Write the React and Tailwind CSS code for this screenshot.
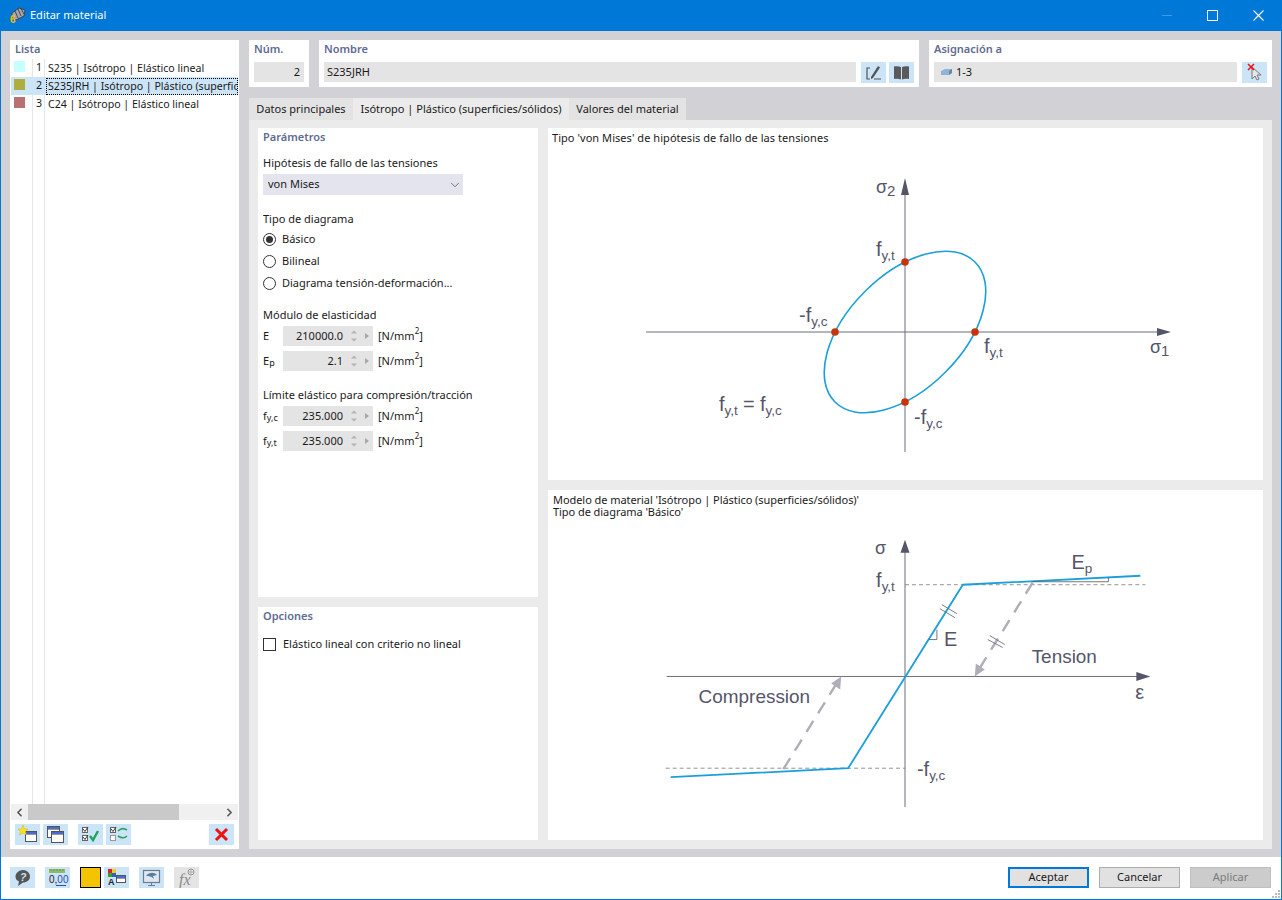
import React from 'react'
import { ChevronDown, ChevronLeft, ChevronRight } from 'lucide-react'

function IconBtn({ children, gray, className = '' }) {
  return (
    <div className={`w-[25px] h-[21px] flex items-center justify-center shrink-0 ${gray ? 'bg-[#e4e4e4]' : 'bg-[#cce4f7]'} ${className}`}>
      {children}
    </div>
  )
}

function Window({ x, y, w = 14, h = 14 }) {
  return (
    <g>
      <rect x={x + 0.5} y={y + 0.5} width={w} height={h} fill="#fff" stroke="#555" />
      <rect x={x + 1} y={y + 1} width={w - 1} height="2" fill="#4a6bd0" />
      <rect x={x + 1} y={y + 3} width={w - 1} height="1" fill="#999" />
    </g>
  )
}

function Section({ children, className = '' }) {
  return <div className={`text-[#5f6b93] font-semibold leading-[18px] ${className}`}>{children}</div>
}

function ListRow({ color, num, name, selected }) {
  return (
    <div className={`h-[18px] flex items-center overflow-hidden whitespace-nowrap text-[10.6px] ${selected ? 'bg-[#cce4f7]' : ''}`}>
      <div className="w-[22px] flex pl-[3px] pb-[3px] shrink-0">
        <div className="w-[11px] h-[11px]" style={{ backgroundColor: color }} />
      </div>
      <div className="w-[9px] text-right shrink-0">{num}</div>
      <div className={`ml-[4px] pl-[1px] flex-1 h-[17px] leading-[15px] overflow-hidden ${selected ? 'border border-dotted border-black' : 'border border-transparent'}`}>{name}</div>
    </div>
  )
}

function Radio({ label, checked }) {
  return (
    <div className="h-[22px] flex items-center gap-[6px]">
      <div className="w-[13px] h-[13px] rounded-full border border-[#333] bg-white flex items-center justify-center">
        {checked && <div className="w-[7px] h-[7px] rounded-full bg-[#333]" />}
      </div>
      <span>{label}</span>
    </div>
  )
}

function NumField({ label, sub, value, className = '' }) {
  return (
    <div className={`h-[20px] flex items-center ${className}`}>
      <div className="w-[20px] shrink-0">
        {label}
        <span className="text-[9px] relative top-[1px]">{sub}</span>
      </div>
      <div className="w-[90px] h-[20px] bg-[#e4e4e4] flex items-center shrink-0">
        <div className="flex-1 text-right">{value}</div>
        <svg width="30" height="20" viewBox="0 0 30 20" className="shrink-0">
          <path d="M8 7.500 L11 4.500 L14 7.500 Z M8 12.500 L11 15.500 L14 12.500 Z" fill="#b4b4b4" />
          <path d="M22 7 L26 10 L22 13 Z" fill="#a8a8a8" />
        </svg>
      </div>
      <div className="ml-[5px]">[N/mm<sup className="text-[8px] relative -top-[1px] align-super leading-none">2</sup>]</div>
    </div>
  )
}

// etiqueta con subindice dentro de los diagramas
function Lbl({ x, y, t, sub, size = 20, subSize = 13.5, dy = 4 }) {
  return (
    <text x={x} y={y} fontSize={size} fill="#55556a" fontFamily="'Liberation Sans', sans-serif">
      {t}
      {sub && <tspan fontSize={subSize} dy={dy}>{sub}</tspan>}
    </text>
  )
}

function YieldDiagram() {
  return (
    <svg viewBox="548 128 715 352" className="w-full h-full">
      <path d="M905 452 V190 M646 332 H1160" stroke="#6c6c80" strokeWidth="1" fill="none" />
      <path d="M905 178 L901 195 H909 Z M1171 332 L1157 328 V336 Z" fill="#55556a" />
      <ellipse cx="905" cy="332" rx="99" ry="57" transform="rotate(-45 905 332)" fill="none" stroke="#1a9fdc" strokeWidth="1.600" />
      <circle cx="905" cy="262" r="3.800" fill="#c8340a" />
      <circle cx="975" cy="332" r="3.800" fill="#c8340a" />
      <circle cx="835" cy="332" r="3.800" fill="#c8340a" />
      <circle cx="905" cy="402" r="3.800" fill="#c8340a" />
      <Lbl x={876} y={193} t="σ" sub="2" size={18} subSize={15} dy={3} />
      <Lbl x={1150} y={353} t="σ" sub="1" size={18} subSize={15} dy={3} />
      <Lbl x={876} y={256} t="f" sub="y,t" />
      <Lbl x={984} y={353} t="f" sub="y,t" />
      <Lbl x={799} y={322} t="-f" sub="y,c" />
      <Lbl x={914} y={424} t="-f" sub="y,c" />
      <Lbl x={719} y={411} t="f" sub="y,t" />
      <Lbl x={743} y={411} t="=" />
      <Lbl x={760} y={411} t="f" sub="y,c" />
    </svg>
  )
}

function CurveDiagram() {
  return (
    <svg viewBox="548 490 715 351" className="w-full h-full">
      <path d="M905 808 V552 M666 677 H1140" stroke="#6c6c80" strokeWidth="1" fill="none" />
      <path d="M905 540 L900.500 553 H909.500 Z M1151 677 L1137 672.500 V681.500 Z" fill="#55556a" />
      <path d="M905 585 H1146 M665 769 H905" stroke="#777" strokeWidth="0.800" strokeDasharray="4 3" fill="none" />
      <path d="M1033 583 L979 670 M783 770 L837 683" stroke="#aeaeb8" strokeWidth="2.400" strokeDasharray="13 9" fill="none" />
      <path d="M975 677 L976 664 L985 670 Z M841 677 L840 690 L831 684 Z" fill="#aeaeb8" />
      <path d="M670 778 L848 769 L963 585 L1141 576" stroke="#1a9fdc" strokeWidth="1.800" fill="none" />
      <path d="M1109 578 V582 H1033 M929 640 H937 V630" stroke="#555" strokeWidth="0.800" fill="none" />
      <path d="M940 609 L955 618 M942 605 L957 614 M988 640 L1003 648 M990 636 L1005 645" stroke="#6c6c80" strokeWidth="0.900" fill="none" />
      <Lbl x={875} y={554} t="σ" size={18} />
      <Lbl x={876} y={587} t="f" sub="y,t" />
      <Lbl x={1072} y={569} t="E" sub="p" />
      <Lbl x={944} y={646} t="E" />
      <Lbl x={1032} y={663} t="Tension" size={19} />
      <Lbl x={698} y={704} t="Compression" size={19} />
      <Lbl x={1136} y={700} t="ε" />
      <Lbl x={917} y={777} t="-f" sub="y,c" />
    </svg>
  )
}

export default function App() {
  return (
    <div className="w-[1282px] h-[900px] flex flex-col border-x border-b border-[#0078d7] bg-white text-[11px] text-[#1a1a1a] font-['Noto_Sans',sans-serif] overflow-hidden">
      {/* barra de titulo */}
      <div className="h-[31px] shrink-0 bg-[#0078d7] -mx-[1px] flex items-center text-white">
        <svg width="17" height="17" viewBox="0 0 17 17" className="ml-[9px]">
          <path d="M3 6 L10 1 L16 3 L15 9 L7 13 L3 11 Z" fill="#a4a4b0" stroke="#333" strokeWidth="0.800" />
          <path d="M6 4 L9 11 M9 2 L12 9 M12 1.500 L15 7" stroke="#333" strokeWidth="0.800" />
          <text x="1" y="16" fontSize="10" fontWeight="700" fill="#f4c000" fontFamily="'Liberation Sans', sans-serif">6</text>
        </svg>
        <span className="ml-[4px]">Editar material</span>
        <div className="flex-1" />
        <div className="w-[10px] h-px bg-[#3f9be3] mr-[35px]" />
        <div className="w-[11px] h-[11px] border border-white mr-[35px]" />
        <svg width="11" height="11" viewBox="0 0 11 11" className="mr-[18px]"><path d="M0.500 0.500 L10.500 10.500 M10.500 0.500 L0.500 10.500" stroke="#fff" strokeWidth="1.100" /></svg>
      </div>

      <div className="flex-1 bg-[#d2d1d6] flex gap-[10px] pl-[9px] pr-[9px] pt-[9px] pb-[8px] min-h-0">
        {/* lista */}
        <div className="w-[229px] bg-white flex flex-col shrink-0">
          <Section className="pl-[5px] h-[19px]">Lista</Section>
          <div className="flex-1 relative pl-[1px] pr-[1px]">
            <div className="absolute left-[22px] top-0 bottom-0 w-px bg-[#e6e6e6]" />
            <div className="absolute left-[34px] top-0 bottom-0 w-px bg-[#e6e6e6]" />
            <div className="relative">
              <ListRow color="#c6ffff" num="1" name="S235 | Isótropo | Elástico lineal" />
              <ListRow color="#aeae3e" num="2" name="S235JRH | Isótropo | Plástico (superficies/sólidos)" selected />
              <ListRow color="#b87070" num="3" name="C24 | Isótropo | Elástico lineal" />
            </div>
          </div>
          <div className="h-[16px] mx-[1px] bg-[#f0f0f0] flex items-center relative shrink-0">
            <ChevronLeft size={13} strokeWidth={3} className="ml-[2px] text-[#555]" />
            <div className="ml-[2px] w-[151px] h-[16px] bg-[#c9c9c9]" />
            <div className="flex-1" />
            <ChevronRight size={13} strokeWidth={3} className="mr-[2px] text-[#555]" />
          </div>
          <div className="h-[29px] flex items-center pl-[5px] pr-[5px] shrink-0">
            <IconBtn>
              <svg width="25" height="21" viewBox="0 0 25 21"><Window x={10} y={7} w={11} h={10} /><path d="M8 1 L9.500 5 L13 5 L10.500 7.500 L11.500 11 L8 9 L4.500 11 L5.500 7.500 L3 5 L6.500 5 Z" fill="#ffe21a" stroke="#c8a800" strokeWidth="0.400" /></svg>
            </IconBtn>
            <IconBtn className="ml-[3px]">
              <svg width="25" height="21" viewBox="0 0 25 21"><Window x={4} y={2} w={12} h={11} /><Window x={8} y={7} w={12} h={11} /></svg>
            </IconBtn>
            <IconBtn className="ml-[10px]">
              <svg width="25" height="21" viewBox="0 0 25 21"><rect x="4.500" y="3.500" width="5" height="5" fill="#fff" stroke="#666" /><rect x="4.500" y="11.500" width="5" height="5" fill="#fff" stroke="#666" /><path d="M5 5 L7 7.500 L10 3 M5 13 L7 15.500 L10 11" stroke="#333" fill="none" /><path d="M12 12 L15 16 L20 7" stroke="#1ca55a" strokeWidth="2.400" fill="none" /></svg>
            </IconBtn>
            <IconBtn className="ml-[3px]">
              <svg width="25" height="21" viewBox="0 0 25 21"><rect x="4.500" y="3.500" width="5" height="5" fill="#fff" stroke="#666" /><rect x="4.500" y="11.500" width="5" height="5" fill="#fff" stroke="#999" /><path d="M5 5 L7 7.500 L10 3" stroke="#333" fill="none" /><path d="M12 7 C15 4 18 4 21 6 M21 12 C18 15 15 14 12 12" stroke="#2aa05a" strokeWidth="1.600" fill="none" /></svg>
            </IconBtn>
            <div className="flex-1" />
            <IconBtn>
              <svg width="25" height="21" viewBox="0 0 25 21"><path d="M7 5 L18 16 M18 5 L7 16" stroke="#f01010" strokeWidth="3" /></svg>
            </IconBtn>
          </div>
        </div>

        {/* derecha */}
        <div className="flex-1 flex flex-col min-w-0">
          <div className="h-[47px] flex gap-[10px] shrink-0">
            <div className="w-[60px] bg-white px-[5px]">
              <Section className="h-[22px]">Núm.</Section>
              <div className="h-[20px] bg-[#e4e4e4] flex items-center justify-end pr-[4px]">2</div>
            </div>
            <div className="w-[600px] bg-white px-[5px]">
              <Section className="h-[22px]">Nombre</Section>
              <div className="flex gap-[3px]">
                <div className="w-[532px] h-[20px] bg-[#e4e4e4] flex items-center pl-[3px] mr-[2px]">S235JRH</div>
                <IconBtn>
                  <svg width="25" height="21" viewBox="0 0 25 21"><path d="M9 6 H6 V17 H9 M13 17 H20" stroke="#555" strokeWidth="1.200" fill="none" /><path d="M10 15 L17 4 L19 5.500 L12 16 L10 17 Z" fill="#555" /></svg>
                </IconBtn>
                <IconBtn>
                  <svg width="25" height="21" viewBox="0 0 25 21"><path d="M12 5 C10 4 7 4 5 4.500 V17 C7 16.500 10 16.500 12 17.500 Z M13 5 C15 4 18 4 20 4.500 V17 C18 16.500 15 16.500 13 17.500 Z" fill="#5a5a5a" /></svg>
                </IconBtn>
              </div>
            </div>
            <div className="flex-1 bg-white px-[5px]">
              <Section className="h-[22px]">Asignación a</Section>
              <div className="flex gap-[5px]">
                <div className="flex-1 h-[20px] bg-[#e4e4e4] flex items-center pl-[6px]">
                  <svg width="15" height="10" viewBox="0 0 15 10"><path d="M1 4 L5 2 H12 V6 L9 8 H1 Z" fill="#8fb4d8" /><path d="M9 8 V4 L12 2 V6 Z" fill="#6488ac" /></svg>
                  <span className="ml-[1px]">1-3</span>
                </div>
                <IconBtn>
                  <svg width="25" height="21" viewBox="0 0 25 21"><path d="M10 5 L10 17 L13 14 L15 18 L17 17 L15 13 L19 13 Z" fill="#e8e8e8" stroke="#777" /><path d="M6 2 L12 8 M12 2 L6 8" stroke="#f01010" strokeWidth="1.500" /></svg>
                </IconBtn>
              </div>
            </div>
          </div>

          {/* pestañas */}
          <div className="h-[22px] mt-[11px] flex shrink-0">
            <div className="w-[104px] bg-[#e3e3e3] flex items-center justify-center pt-[1px]">Datos principales</div>
            <div className="w-[216px] bg-[#ebebeb] flex items-center justify-center pt-[1px]">Isótropo | Plástico (superficies/sólidos)</div>
            <div className="w-[117px] bg-[#e3e3e3] flex items-center justify-center pt-[1px]">Valores del material</div>
          </div>

          <div className="flex-1 bg-[#ebebeb] p-[9px] pt-[8px] flex gap-[10px] min-h-0">
            <div className="w-[280px] flex flex-col gap-[10px] shrink-0">
              <div className="h-[469px] bg-white px-[5px]">
                <Section className="h-[21px]">Parámetros</Section>
                <div className="h-[18px] mt-[5px] leading-[18px]">Hipótesis de fallo de las tensiones</div>
                <div className="mt-[2px] w-[200px] h-[21px] bg-[#e4e4ee] flex items-center pl-[5px] pr-[1px] justify-between">
                  <span>von Mises</span>
                  <ChevronDown size={14} strokeWidth={1.200} className="text-[#444]" />
                </div>
                <div className="mt-[15px] h-[18px] leading-[18px]">Tipo de diagrama</div>
                <div>
                  <Radio label="Básico" checked />
                  <Radio label="Bilineal" />
                  <Radio label="Diagrama tensión-deformación..." />
                </div>
                <div className="mt-[12px] h-[18px] leading-[18px]">Módulo de elasticidad</div>
                <NumField label="E" value="210000.0" className="mt-[2px]" />
                <NumField label="E" sub="p" value="2.1" className="mt-[5px]" />
                <div className="mt-[15px] h-[18px] leading-[18px]">Límite elástico para compresión/tracción</div>
                <NumField label="f" sub="y,c" value="235.000" className="mt-[2px]" />
                <NumField label="f" sub="y,t" value="235.000" className="mt-[5px]" />
              </div>
              <div className="flex-1 bg-white px-[5px]">
                <Section className="h-[18px]">Opciones</Section>
                <div className="mt-[10px] flex items-center gap-[7px] h-[18px]">
                  <div className="w-[13px] h-[13px] border border-[#333] bg-white" />
                  <span>Elástico lineal con criterio no lineal</span>
                </div>
              </div>
            </div>
            <div className="flex-1 flex flex-col gap-[10px] min-w-0">
              <div className="h-[352px] bg-white relative">
                <div className="absolute left-[4px] top-[2px] leading-[16px] tracking-[0.05px]">Tipo 'von Mises' de hipótesis de fallo de las tensiones</div>
                <YieldDiagram />
              </div>
              <div className="flex-1 bg-white relative min-h-0">
                <div className="absolute left-[5px] top-[4px] leading-[12px] tracking-[-0.06px]">
                  Modelo de material 'Isótropo | Plástico (superficies/sólidos)'<br />Tipo de diagrama 'Básico'
                </div>
                <CurveDiagram />
              </div>
            </div>
          </div>
        </div>
      </div>

      {/* barra inferior */}
      <div className="h-[42px] bg-white shrink-0 flex items-center pl-[9px] pr-[10px] pb-[1px] relative">
        <IconBtn>
          <svg width="25" height="21" viewBox="0 0 25 21"><path d="M13 3 C17 3 20 6 20 9.500 C20 13 17 15.500 13 15.500 L8 19 L9 14.500 C6.500 13.500 5.500 11.500 5.500 9.500 C5.500 6 9 3 13 3 Z" fill="#555" /><text x="10" y="13.500" fontSize="10.500" fontWeight="700" fontStyle="italic" fill="#cce4f7" fontFamily="'Liberation Sans', sans-serif">?</text></svg>
        </IconBtn>
        <IconBtn className="ml-[10px]">
          <svg width="25" height="21" viewBox="0 0 25 21"><rect x="4" y="2" width="16" height="4" fill="#8dbb6a" /><path d="M6 2V4 M9 2V4 M12 2V4 M15 2V4 M18 2V4" stroke="#5d8a40" strokeWidth="0.700" /><text x="4" y="16" fontSize="10" fontWeight="400" fill="#222" fontFamily="'Liberation Sans', sans-serif">0,<tspan fill="#2a4fb0">00</tspan></text><path d="M11 18.500 H21" stroke="#2a4fb0" /></svg>
        </IconBtn>
        <div className="ml-[10px] w-[21px] h-[21px] bg-[#f4c400] border border-black shrink-0" />
        <IconBtn className="ml-[3px]">
          <svg width="25" height="21" viewBox="0 0 25 21"><rect x="4" y="2" width="4" height="4" fill="#e02020" /><rect x="8" y="2" width="4" height="4" fill="#e8d020" /><rect x="4" y="6" width="4" height="4" fill="#30a030" /><rect x="8" y="6" width="4" height="4" fill="#3060d0" /><Window x={12} y={8} w={9} h={7} /><text x="4" y="18" fontSize="9" fontWeight="700" fill="#222" fontFamily="'Liberation Sans', sans-serif">A</text></svg>
        </IconBtn>
        <IconBtn className="ml-[10px]">
          <svg width="25" height="21" viewBox="0 0 25 21"><rect x="4.500" y="3.500" width="16" height="12" fill="#dfe8f2" stroke="#6c7c90" strokeWidth="1.200" /><path d="M7 9 C10 5 15 5 18 8 L14 9 L15 12 C12 9 10 9 7 9 Z" fill="#5a7ca0" /><path d="M12.500 16 V18 M9 18.500 H16" stroke="#6c7c90" /></svg>
        </IconBtn>
        <IconBtn gray className="ml-[10px]">
          <svg width="25" height="21" viewBox="0 0 25 21"><text x="5" y="18" fontSize="16" fontStyle="italic" fill="#8a8a8a" fontFamily="'Liberation Serif', serif">fx</text><circle cx="17" cy="5" r="3" fill="none" stroke="#999" /><path d="M14 5 H20 M17 2 V8" stroke="#999" strokeWidth="0.600" /></svg>
        </IconBtn>
        <div className="flex-1" />
        <div className="w-[81px] h-[21px] bg-[#e1e1e1] border-2 border-[#0078d7] flex items-center justify-center">Aceptar</div>
        <div className="ml-[10px] w-[81px] h-[21px] bg-[#e1e1e1] border border-[#adadad] flex items-center justify-center">Cancelar</div>
        <div className="ml-[10px] w-[81px] h-[21px] bg-[#cccccc] border border-[#bfbfbf] flex items-center justify-center text-[#7a7a7a]">Aplicar</div>
        <svg width="8" height="8" viewBox="0 0 8 8" className="absolute right-[1px] bottom-[1px]"><path d="M6 0h2v2H6z M3 3h2v2H3z M6 3h2v2H6z M0 6h2v2H0z M3 6h2v2H3z M6 6h2v2H6z" fill="#bbb" /></svg>
      </div>
    </div>
  )
}
